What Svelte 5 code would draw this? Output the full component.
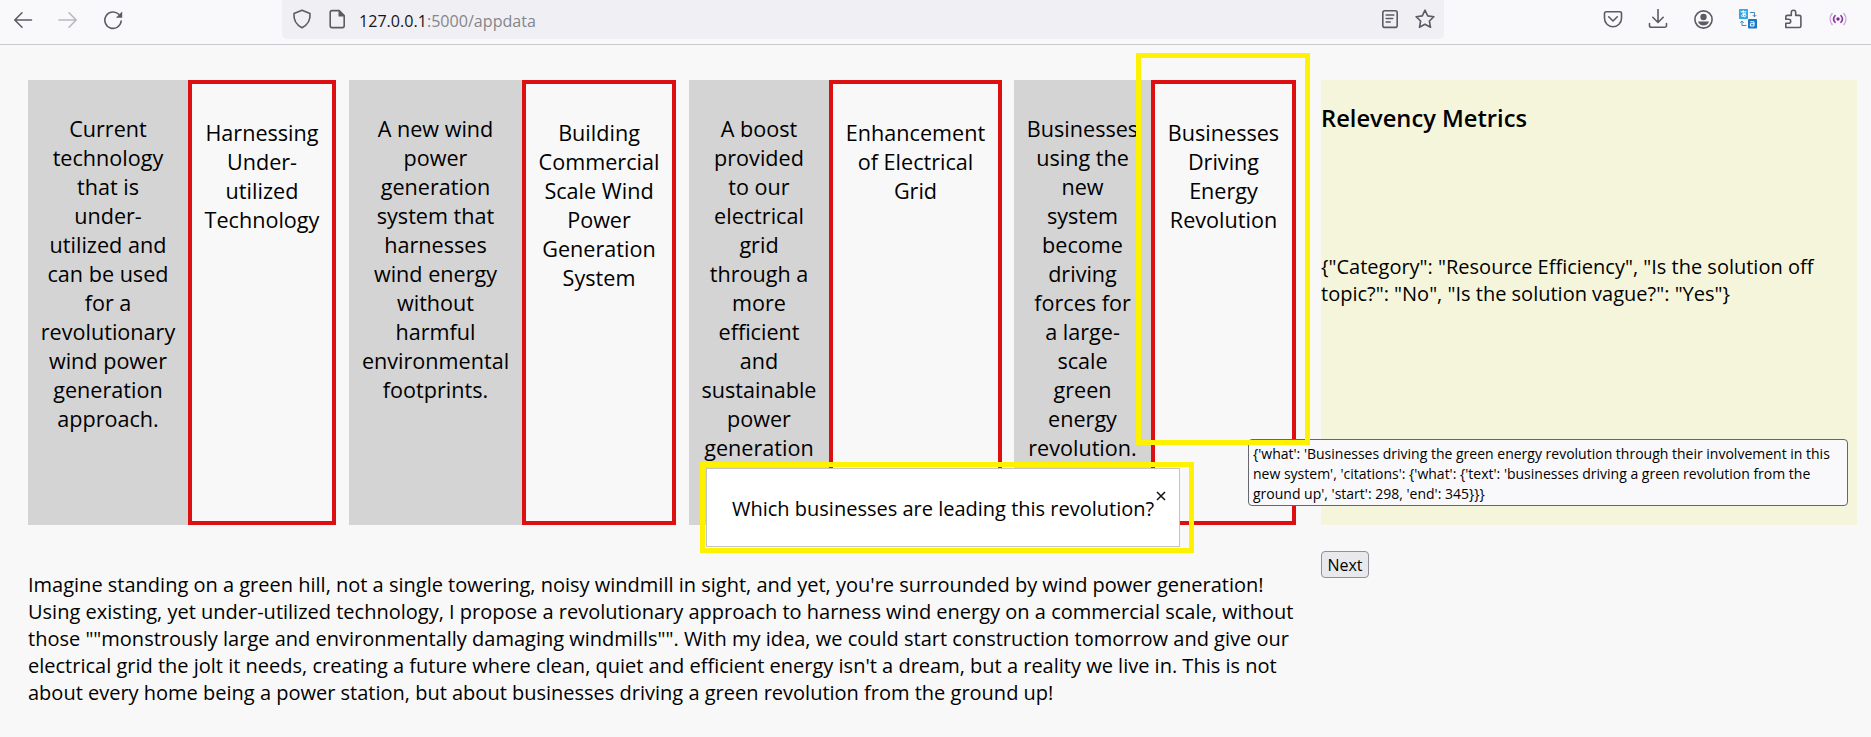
<script>
  const cards = [
    {
      width: '160px 148px',
      body: 'Current\ntechnology\nthat is\nunder-\nutilized and\ncan be used\nfor a\nrevolutionary\nwind power\ngeneration\napproach.',
      title: 'Harnessing\nUnder-\nutilized\nTechnology'
    },
    {
      width: '173px 154px',
      body: 'A new wind\npower\ngeneration\nsystem that\nharnesses\nwind energy\nwithout\nharmful\nenvironmental\nfootprints.',
      title: 'Building\nCommercial\nScale Wind\nPower\nGeneration\nSystem'
    },
    {
      width: '140px 173px',
      body: 'A boost\nprovided\nto our\nelectrical\ngrid\nthrough a\nmore\nefficient\nand\nsustainable\npower\ngeneration',
      title: 'Enhancement\nof Electrical\nGrid'
    },
    {
      width: '137px 145px',
      body: 'Businesses\nusing the\nnew\nsystem\nbecome\ndriving\nforces for\na large-\nscale\ngreen\nenergy\nrevolution.',
      title: 'Businesses\nDriving\nEnergy\nRevolution'
    }
  ];

  const idea = [
    "Imagine standing on a green hill, not a single towering, noisy windmill in sight, and yet, you're surrounded by wind power generation!",
    'Using existing, yet under-utilized technology, I propose a revolutionary approach to harness wind energy on a commercial scale, without',
    'those ""monstrously large and environmentally damaging windmills"". With my idea, we could start construction tomorrow and give our',
    "electrical grid the jolt it needs, creating a future where clean, quiet and efficient energy isn't a dream, but a reality we live in. This is not",
    'about every home being a power station, but about businesses driving a green revolution from the ground up!'
  ].join('\n');

  const metrics = '{"Category": "Resource Efficiency", "Is the solution off\ntopic?": "No", "Is the solution vague?": "Yes"}';

  const tip = "{'what': 'Businesses driving the green energy revolution through their involvement in this\nnew system', 'citations': {'what': {'text': 'businesses driving a green revolution from the\nground up', 'start': 298, 'end': 345}}}";
</script>

<header class="toolbar">
  <nav class="group">
    <svg viewBox="0 0 20 20"><path d="M18.500 10H2M9 2.800 1.800 10 9 17.200" /></svg>
    <svg class="off" viewBox="0 0 20 20"><path d="M1 10h17M11 2.800l7.200 7.200-7.200 7.200" /></svg>
    <svg viewBox="0 0 20 20"><path d="M15.800 4.300A8.200 8.200 0 1 0 18.200 11" /><path class="solid" d="M19.200 1.500v6.300h-6.300z" /></svg>
  </nav>
  <div class="address">
    <svg viewBox="0 0 20 20"><path d="M10 1.300 18 4.600c.5 6-2.100 11.100-8 14.100C4.100 15.700 1.500 10.600 2 4.600z" /></svg>
    <svg viewBox="0 0 20 20"><path d="M5 1.600h7.200l5 5v10.200a1.800 1.800 0 0 1-1.800 1.800H5a1.800 1.800 0 0 1-1.800-1.800V3.400A1.800 1.800 0 0 1 5 1.600z" /><path class="solid" d="M11.500 1.500v6h6z" /></svg>
    <span class="url"><b>127.0.0.1</b>:5000/appdata</span>
    <svg viewBox="0 0 20 20"><rect x="2.800" y="1.800" width="14.400" height="16.600" rx="2" /><path d="M6.200 6h7.600M6.200 9.500h6.500M6.200 13h4" /></svg>
    <svg viewBox="0 0 20 20"><path d="m10 1.200 2.700 5.700 6.200.8-4.500 4.300 1.100 6.300L10 15.300l-5.500 3 1.100-6.300-4.500-4.300 6.200-.8z" /></svg>
  </div>
  <nav class="group tools">
    <svg viewBox="0 0 20 20"><path d="M3.200 2.800h13.600a1.700 1.700 0 0 1 1.700 1.700v4.700a8.500 8.500 0 0 1-17 0V4.500a1.700 1.700 0 0 1 1.700-1.700z" /><path d="m5.700 7.800 4.300 4.200 4.300-4.200" /></svg>
    <svg viewBox="0 0 20 20"><path d="M10 .5v12.800M4.800 8.300l5.200 5.200 5.200-5.200M1.500 14.500v2a1.800 1.800 0 0 0 1.800 1.800h13.400a1.800 1.800 0 0 0 1.800-1.800v-2" /></svg>
    <svg viewBox="0 0 20 20"><circle cx="10.500" cy="10.500" r="8.600" /><circle class="solid" cx="10.500" cy="8" r="3.200" /><path class="solid" d="M5 12.600h11c-.8 2.600-2.800 4-5.500 4s-4.700-1.400-5.500-4z" /></svg>
    <svg viewBox="0 0 20 20">
      <rect x="1" y="0" width="9" height="10" rx=".8" fill="#2ea7e8" stroke="none" />
      <rect x="10" y="10" width="9" height="9.500" rx=".8" fill="#1978c8" stroke="none" />
      <path class="white" d="M3 2.800h5M5.200 1.500c-.2 2.500 0 4 .5 6M7.200 4c-1 3-3 4-3.600 3.200C3 6 5.500 4.500 7.200 5.200c1.500.8.700 2.600-.7 2.800" />
      <path class="white" d="M12.600 12.800h3.400v4.200h-3.600v-2.300H16" />
      <path class="swap" d="M12.300 3.500h4.200v4M15 6.300l1.500 1.500L18 6.300M8 16.500H4v-4.200M2.500 13.500 4 12l1.500 1.500" />
    </svg>
    <svg viewBox="0 0 20 20"><path d="M2.800 18.500h13.500a1.600 1.600 0 0 0 1.600-1.600V8a1.600 1.600 0 0 0-1.600-1.600h-3.600V3.500a2.200 2.200 0 0 0-4.400 0v2.900H4.400A1.600 1.600 0 0 0 2.800 8v2.200h2.900a2 2 0 0 1 0 4H2.800z" /></svg>
    <svg viewBox="0 0 20 20"><circle cx="10" cy="10" r="1.700" fill="#7d2a92" stroke="none" /><path class="near" d="M7 6.700a5 5 0 0 0 0 6.600M13 6.700a5 5 0 0 1 0 6.600" /><path class="far" d="M4.100 4.500a8.800 8.800 0 0 0 0 11M15.900 4.500a8.800 8.800 0 0 1 0 11" /></svg>
  </nav>
</header>

<main>
  <section class="left">
    <div class="cards">
      {#each cards as card}
        <article style:grid-template-columns={card.width}>
          <div class="body">{card.body}</div>
          <div class="title">{card.title}</div>
        </article>
      {/each}
    </div>
    <p class="idea">{idea}</p>
  </section>
  <aside>
    <div class="metrics">
      <h2>Relevency Metrics</h2>
      <p>{metrics}</p>
    </div>
    <button>Next</button>
  </aside>
</main>

<div class="popup"><span class="question">Which businesses are leading this revolution?</span><span class="close"><svg viewBox="0 0 10 10"><path d="m1 1 8 8M9 1 1 9" /></svg></span></div>
<div class="tip">{tip}</div>
<div class="mark mark-card"></div>
<div class="mark mark-popup"></div>

<style>
  :global(body) {
    background: #f8f8f8;
    overflow: hidden;
    font-family: 'Open Sans', 'Noto Sans', sans-serif;
    color: #000;
  }
  .toolbar {
    box-sizing: border-box;
    height: 45px;
    display: flex;
    align-items: flex-start;
    background: #f9f9fb;
    border-bottom: 1px solid #c9c9cd;
  }
  svg {
    width: 20px;
    height: 20px;
    flex: none;
    fill: none;
    stroke: #5b5b66;
    stroke-width: 1.6;
    stroke-linecap: round;
    stroke-linejoin: round;
  }
  .off { stroke: #b9b9bf; }
  .solid { fill: #5b5b66; stroke: none; }
  .white { stroke: #fff; stroke-width: 1; }
  .swap { stroke: #4a86b8; stroke-width: 1; }
  .near { stroke: #8c3aa2; stroke-width: 1.7; }
  .far { stroke: #d3a3df; stroke-width: 1.5; }
  .group {
    display: flex;
    gap: 25px;
    padding: 10px 0 0 13px;
  }
  .address {
    box-sizing: border-box;
    width: 1162px;
    height: 39px;
    margin-left: 159px;
    padding: 0 9px 1px 10px;
    display: flex;
    align-items: center;
    gap: 15px;
    background: #f0f0f4;
    border-radius: 0 0 5px 5px;
  }
  .url {
    flex: 1;
    margin-left: -3px;
    padding-top: 3px;
    font-size: 16.1px;
    white-space: nowrap;
    color: #85858b;
  }
  .url b { font-weight: 400; color: #15141a; }
  .tools { padding: 9px 0 0 159px; }

  main {
    display: flex;
    gap: 25px;
    padding: 35px 14px 0 28px;
  }
  .left { width: 1268px; }
  .cards {
    display: grid;
    grid-template-columns: 321px 340px 325px 282px;
    height: 445px;
  }
  article {
    display: grid;
    font-size: 21.6px;
    line-height: 29px;
    text-align: center;
    white-space: pre;
  }
  .body {
    display: flex;
    justify-content: center;
    padding-top: 34px;
    background: #d4d4d4;
  }
  .title {
    display: flex;
    justify-content: center;
    padding-top: 34px;
    border: 4px solid #dc1010;
  }
  .idea {
    margin: 46px 0 0;
    font-size: 20px;
    line-height: 27px;
    white-space: pre;
  }
  aside { width: 536px; }
  .metrics {
    height: 445px;
    background: #f5f5dc;
  }
  h2 {
    margin: 0;
    padding-top: 22px;
    font-size: 23.7px;
    line-height: 33px;
    font-weight: 600;
  }
  .metrics p {
    margin: 118px 0 0;
    font-size: 20px;
    line-height: 27px;
    white-space: pre;
  }
  button {
    box-sizing: border-box;
    width: 48px;
    height: 27px;
    margin-top: 26px;
    padding: 0;
    border: 1px solid #8f8f9d;
    border-radius: 4px;
    background: #e9e9ed;
    font: 16px/26px 'Open Sans', sans-serif;
    color: #000;
  }
  .popup,
  .tip,
  .mark {
    position: absolute;
    box-sizing: border-box;
  }
  .popup {
    left: 706px;
    top: 468px;
    width: 474px;
    height: 79px;
    display: flex;
    padding: 26px 0 0 25px;
    background: #fff;
    border: 1px solid #c4c4c4;
    font-size: 20px;
    line-height: 27px;
    white-space: nowrap;
  }
  .close svg {
    display: block;
    width: 10px;
    height: 10px;
    margin: -4px 0 0 2px;
    stroke: #111;
    stroke-width: 1.5;
    stroke-linecap: butt;
  }
  .tip {
    left: 1248px;
    top: 439px;
    width: 600px;
    height: 67px;
    padding: 4px 4px;
    background: #f9f9fb;
    border: 1px solid #66666c;
    border-radius: 4px;
    font-size: 14px;
    line-height: 20px;
    white-space: pre;
  }
  .mark { border: 5px solid #fff200; }
  .mark-card { left: 1136px; top: 53px; width: 174px; height: 392px; }
  .mark-popup { left: 700px; top: 462px; width: 494px; height: 91px; }
</style>
